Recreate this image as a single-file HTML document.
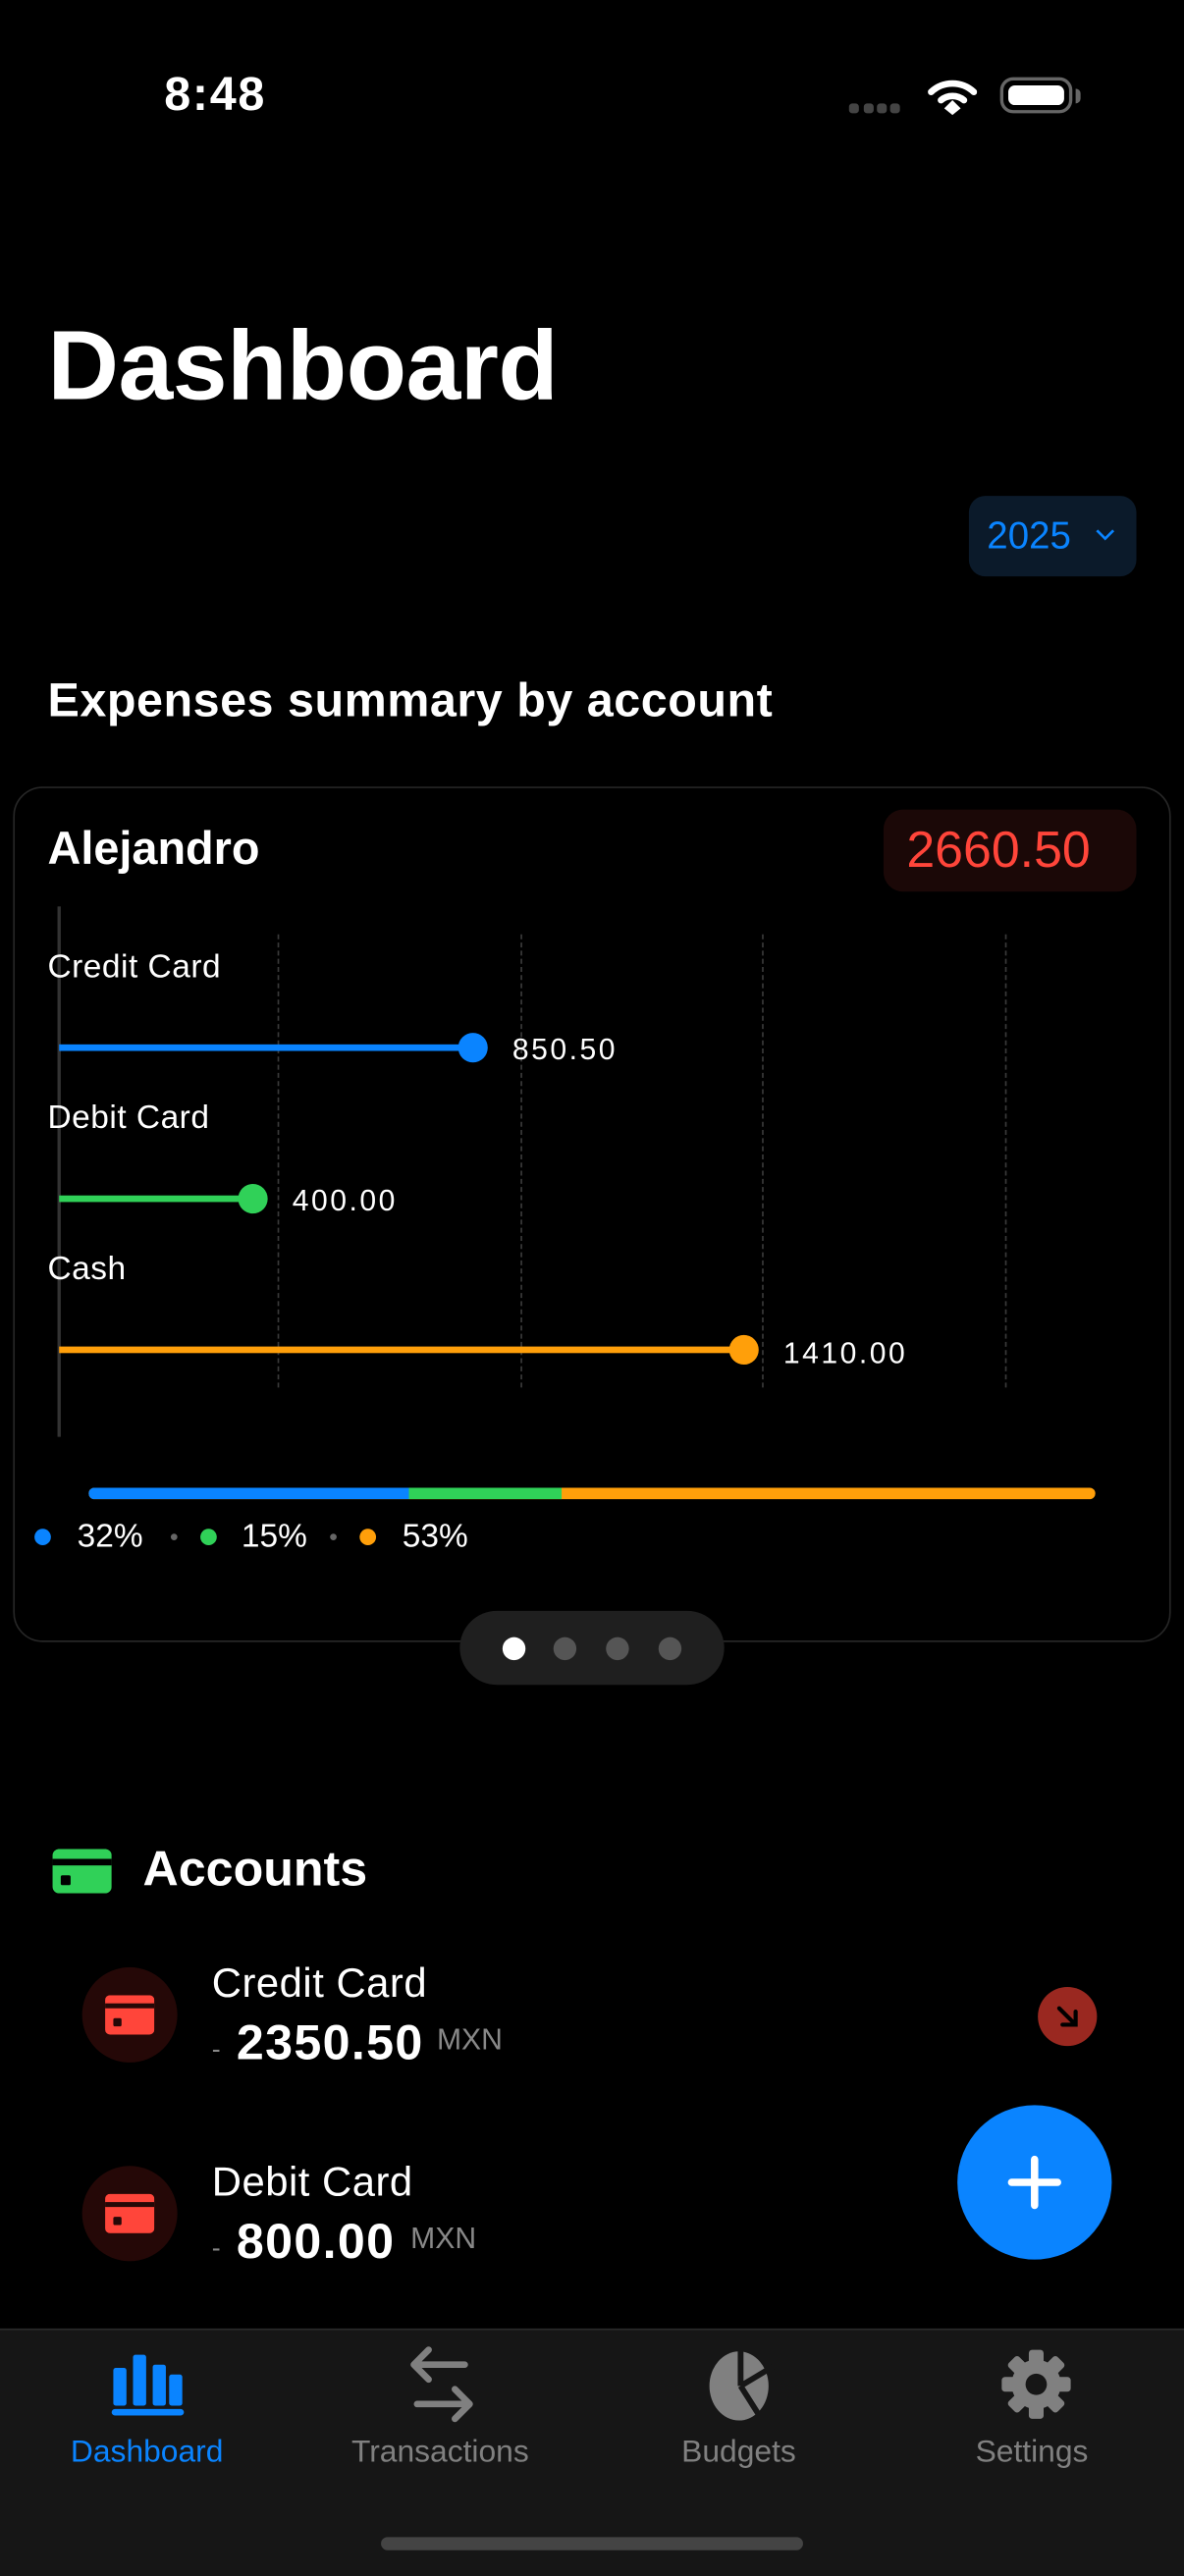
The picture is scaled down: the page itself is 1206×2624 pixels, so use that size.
<!DOCTYPE html>
<html><head><meta charset="utf-8"><style>
html,body{margin:0;padding:0;background:#000;width:1206px;height:2622px;overflow:hidden}
#s{position:absolute;left:0;top:0;width:721px;height:1568px;transform:scale(1.6727);transform-origin:0 0;font-family:"Liberation Sans",sans-serif;color:#fff}
.a{position:absolute}
.t{position:absolute;white-space:nowrap;line-height:1}
.dash{position:absolute;top:569px;height:276px;border-left:1.5px dashed #3a3a3a}
.dot{position:absolute;border-radius:50%}
</style></head><body><div id="s">
<div class="t" style="left:100px;top:44px;font-size:29px;font-weight:bold;letter-spacing:1px">8:48</div>
<div class="a" style="left:517px;top:63px">
 <span class="dot" style="left:0;top:0;width:6px;height:6px;border-radius:2px;background:#444"></span>
 <span class="dot" style="left:9px;top:0;width:6px;height:6px;border-radius:2px;background:#444"></span>
 <span class="dot" style="left:17px;top:0;width:6px;height:6px;border-radius:2px;background:#444"></span>
 <span class="dot" style="left:25px;top:0;width:6px;height:6px;border-radius:2px;background:#444"></span>
</div>
<svg class="a" style="left:565px;top:46px" width="30" height="26" viewBox="0 0 30 26"><path d="M2 10 A19 19 0 0 1 28 10" stroke="#fff" stroke-width="4" fill="none" stroke-linecap="round"/><path d="M8 15 A11 11 0 0 1 22 15" stroke="#fff" stroke-width="4" fill="none" stroke-linecap="round"/><path d="M10 20 L15 15 L20 20 L15 24Z" fill="#fff"/></svg>
<div class="a" style="left:609px;top:47px;width:44px;height:22px;border:2.5px solid #666;border-radius:8px;box-sizing:border-box"><div class="a" style="left:3px;top:3px;right:3px;bottom:3px;background:#fff;border-radius:4px"></div></div>
<div class="a" style="left:655px;top:54px;width:3px;height:9px;background:#666;border-radius:0 3px 3px 0"></div>

<div class="t" style="left:29px;top:193px;font-size:60px;font-weight:bold;letter-spacing:-0.3px">Dashboard</div>
<div class="a" style="left:590px;top:302px;width:102px;height:49px;background:#0b1a2a;border-radius:10px"></div>
<div class="t" style="left:601px;top:315px;font-size:23px;color:#0a84ff">2025</div>
<svg class="a" style="left:666px;top:321px" width="14" height="10"><path d="M2 2 L7 7 L12 2" stroke="#0a84ff" stroke-width="1.6" fill="none"/></svg>

<div class="t" style="left:29px;top:413px;font-size:29px;font-weight:600;letter-spacing:0.3px">Expenses summary by account</div>

<div class="a" style="left:8px;top:479px;width:705px;height:521px;border:1px solid #262626;border-radius:18px;box-sizing:border-box"></div>
<div class="t" style="left:29px;top:503px;font-size:28px;font-weight:600">Alejandro</div>
<div class="a" style="left:538px;top:493px;width:154px;height:50px;background:#1b0807;border-radius:12px"></div>
<div class="t" style="left:552px;top:502px;font-size:31px;color:#ff453a">2660.50</div>

<div class="a" style="left:35px;top:552px;width:1.5px;height:323px;background:#333"></div>
<div class="dash" style="left:169px"></div><div class="dash" style="left:317px"></div><div class="dash" style="left:464px"></div><div class="dash" style="left:612px"></div>

<div class="t" style="left:29px;top:579px;font-size:20px;letter-spacing:0.3px">Credit Card</div>
<div class="a" style="left:36px;top:636px;width:252px;height:4px;background:#0a84ff"></div>
<div class="dot" style="left:279px;top:629px;width:18px;height:18px;background:#0a84ff"></div>
<div class="t" style="left:312px;top:630px;font-size:18px;letter-spacing:1.5px">850.50</div>

<div class="t" style="left:29px;top:671px;font-size:20px;letter-spacing:0.3px">Debit Card</div>
<div class="a" style="left:36px;top:728px;width:118px;height:4px;background:#30d158"></div>
<div class="dot" style="left:145px;top:721px;width:18px;height:18px;background:#30d158"></div>
<div class="t" style="left:178px;top:722px;font-size:18px;letter-spacing:1.5px">400.00</div>

<div class="t" style="left:29px;top:763px;font-size:20px;letter-spacing:0.3px">Cash</div>
<div class="a" style="left:36px;top:820px;width:417px;height:4px;background:#ff9f0a"></div>
<div class="dot" style="left:444px;top:813px;width:18px;height:18px;background:#ff9f0a"></div>
<div class="t" style="left:477px;top:815px;font-size:18px;letter-spacing:1.5px">1410.00</div>

<div class="a" style="left:54px;top:906px;width:613px;height:7px;border-radius:4px;overflow:hidden;background:#ff9f0a">
 <div class="a" style="left:0;top:0;width:195px;height:7px;background:#0a84ff"></div>
 <div class="a" style="left:195px;top:0;width:93px;height:7px;background:#30d158"></div>
</div>
<div class="dot" style="left:21px;top:931px;width:10px;height:10px;background:#0a84ff"></div>
<div class="t" style="left:47px;top:926px;font-size:20px">32%</div>
<div class="dot" style="left:104px;top:934px;width:4px;height:4px;background:#666"></div>
<div class="dot" style="left:122px;top:931px;width:10px;height:10px;background:#30d158"></div>
<div class="t" style="left:147px;top:926px;font-size:20px">15%</div>
<div class="dot" style="left:201px;top:934px;width:4px;height:4px;background:#666"></div>
<div class="dot" style="left:219px;top:931px;width:10px;height:10px;background:#ff9f0a"></div>
<div class="t" style="left:245px;top:926px;font-size:20px">53%</div>

<div class="a" style="left:280px;top:981px;width:161px;height:45px;background:#1f1f1f;border-radius:23px"></div>
<div class="dot" style="left:306px;top:997px;width:14px;height:14px;background:#fff"></div>
<div class="dot" style="left:337px;top:997px;width:14px;height:14px;background:#555"></div>
<div class="dot" style="left:369px;top:997px;width:14px;height:14px;background:#555"></div>
<div class="dot" style="left:401px;top:997px;width:14px;height:14px;background:#555"></div>

<svg class="a" style="left:32px;top:1126px" width="36" height="27"><rect x="0" y="0" width="36" height="27" rx="4" fill="#30d158"/><rect x="0" y="6" width="36" height="4" fill="#000"/><rect x="5" y="16" width="6" height="6" rx="1" fill="#000"/></svg>
<div class="t" style="left:87px;top:1124px;font-size:30px;font-weight:600">Accounts</div>

<div class="dot" style="left:50px;top:1198px;width:58px;height:58px;background:#250807"></div>
<svg class="a" style="left:64px;top:1215px" width="30" height="24"><rect width="30" height="24" rx="3" fill="#ff453a"/><rect y="5" width="30" height="3" fill="#250807"/><rect x="5" y="14" width="5" height="5" rx="1" fill="#250807"/></svg>
<div class="t" style="left:129px;top:1196px;font-size:25px;letter-spacing:0.3px">Credit Card</div>
<div class="t" style="left:129px;top:1241px;font-size:16px;color:#888">-</div>
<div class="t" style="left:144px;top:1230px;font-size:30px;font-weight:600;letter-spacing:0.8px">2350.50</div>
<div class="t" style="left:266px;top:1233px;font-size:18px;color:#888">MXN</div>
<div class="dot" style="left:632px;top:1210px;width:36px;height:36px;background:#9a2820"></div>
<svg class="a" style="left:640px;top:1218px" width="20" height="20"><path d="M5 5 L15 15 M15 7 L15 15 L7 15" stroke="#000" stroke-width="2.5" fill="none" stroke-linecap="round"/></svg>

<div class="dot" style="left:50px;top:1319px;width:58px;height:58px;background:#250807"></div>
<svg class="a" style="left:64px;top:1336px" width="30" height="24"><rect width="30" height="24" rx="3" fill="#ff453a"/><rect y="5" width="30" height="3" fill="#250807"/><rect x="5" y="14" width="5" height="5" rx="1" fill="#250807"/></svg>
<div class="t" style="left:129px;top:1317px;font-size:25px;letter-spacing:0.3px">Debit Card</div>
<div class="t" style="left:129px;top:1362px;font-size:16px;color:#888">-</div>
<div class="t" style="left:144px;top:1351px;font-size:30px;font-weight:600;letter-spacing:0.8px">800.00</div>
<div class="t" style="left:250px;top:1354px;font-size:18px;color:#888">MXN</div>

<div class="dot" style="left:583px;top:1282px;width:94px;height:94px;background:#0a84ff"></div>
<svg class="a" style="left:612px;top:1311px" width="36" height="36"><path d="M18 4 V32 M4 18 H32" stroke="#fff" stroke-width="4.5" stroke-linecap="round"/></svg>

<div class="a" style="left:0;top:1418px;width:721px;height:150px;background:#161616;border-top:1px solid #2a2a2a"></div>
<svg class="a" style="left:66px;top:1432px" width="48" height="40"><rect x="3" y="10" width="8" height="23" rx="1.5" fill="#0a84ff"/><rect x="15" y="2" width="8" height="31" rx="1.5" fill="#0a84ff"/><rect x="27" y="8" width="8" height="25" rx="1.5" fill="#0a84ff"/><rect x="37" y="14" width="8" height="19" rx="1.5" fill="#0a84ff"/><rect x="2" y="35" width="44" height="4" rx="2" fill="#0a84ff"/></svg>
<div class="t" style="left:43px;top:1484px;font-size:19px;color:#0a84ff">Dashboard</div>
<svg class="a" style="left:246px;top:1428px" width="48" height="50"><path d="M6 12 H37 M15 3 L6 12 L15 21 M8 36 H39 M31 27 L40 36 L31 45" stroke="#808080" stroke-width="4" fill="none" stroke-linecap="round" stroke-linejoin="round"/></svg>
<div class="t" style="left:214px;top:1484px;font-size:19px;color:#808080">Transactions</div>
<svg class="a" style="left:429px;top:1430px" width="44" height="46" viewBox="0 0 44 46"><ellipse cx="21" cy="23" rx="18" ry="21" fill="#808080"/><path d="M22 23 L22 0 M22 23 L42 11 M22 23 L34 42" stroke="#161616" stroke-width="3.5"/></svg>
<div class="t" style="left:415px;top:1484px;font-size:19px;color:#808080">Budgets</div>
<svg class="a" style="left:609px;top:1430px" width="44" height="44" viewBox="0 0 44 44"><g fill="#808080" transform="translate(22 22)"><circle r="15"/><rect x="-4.5" y="-21" width="9" height="10" rx="2"/><rect x="-4.5" y="-21" width="9" height="10" rx="2" transform="rotate(45)"/><rect x="-4.5" y="-21" width="9" height="10" rx="2" transform="rotate(90)"/><rect x="-4.5" y="-21" width="9" height="10" rx="2" transform="rotate(135)"/><rect x="-4.5" y="-21" width="9" height="10" rx="2" transform="rotate(180)"/><rect x="-4.5" y="-21" width="9" height="10" rx="2" transform="rotate(225)"/><rect x="-4.5" y="-21" width="9" height="10" rx="2" transform="rotate(270)"/><rect x="-4.5" y="-21" width="9" height="10" rx="2" transform="rotate(315)"/><circle r="6.5" fill="#161616"/></g></svg>
<div class="t" style="left:594px;top:1484px;font-size:19px;color:#808080">Settings</div>
<div class="a" style="left:232px;top:1545px;width:257px;height:8px;background:#444;border-radius:4px"></div>
</div></body></html>
